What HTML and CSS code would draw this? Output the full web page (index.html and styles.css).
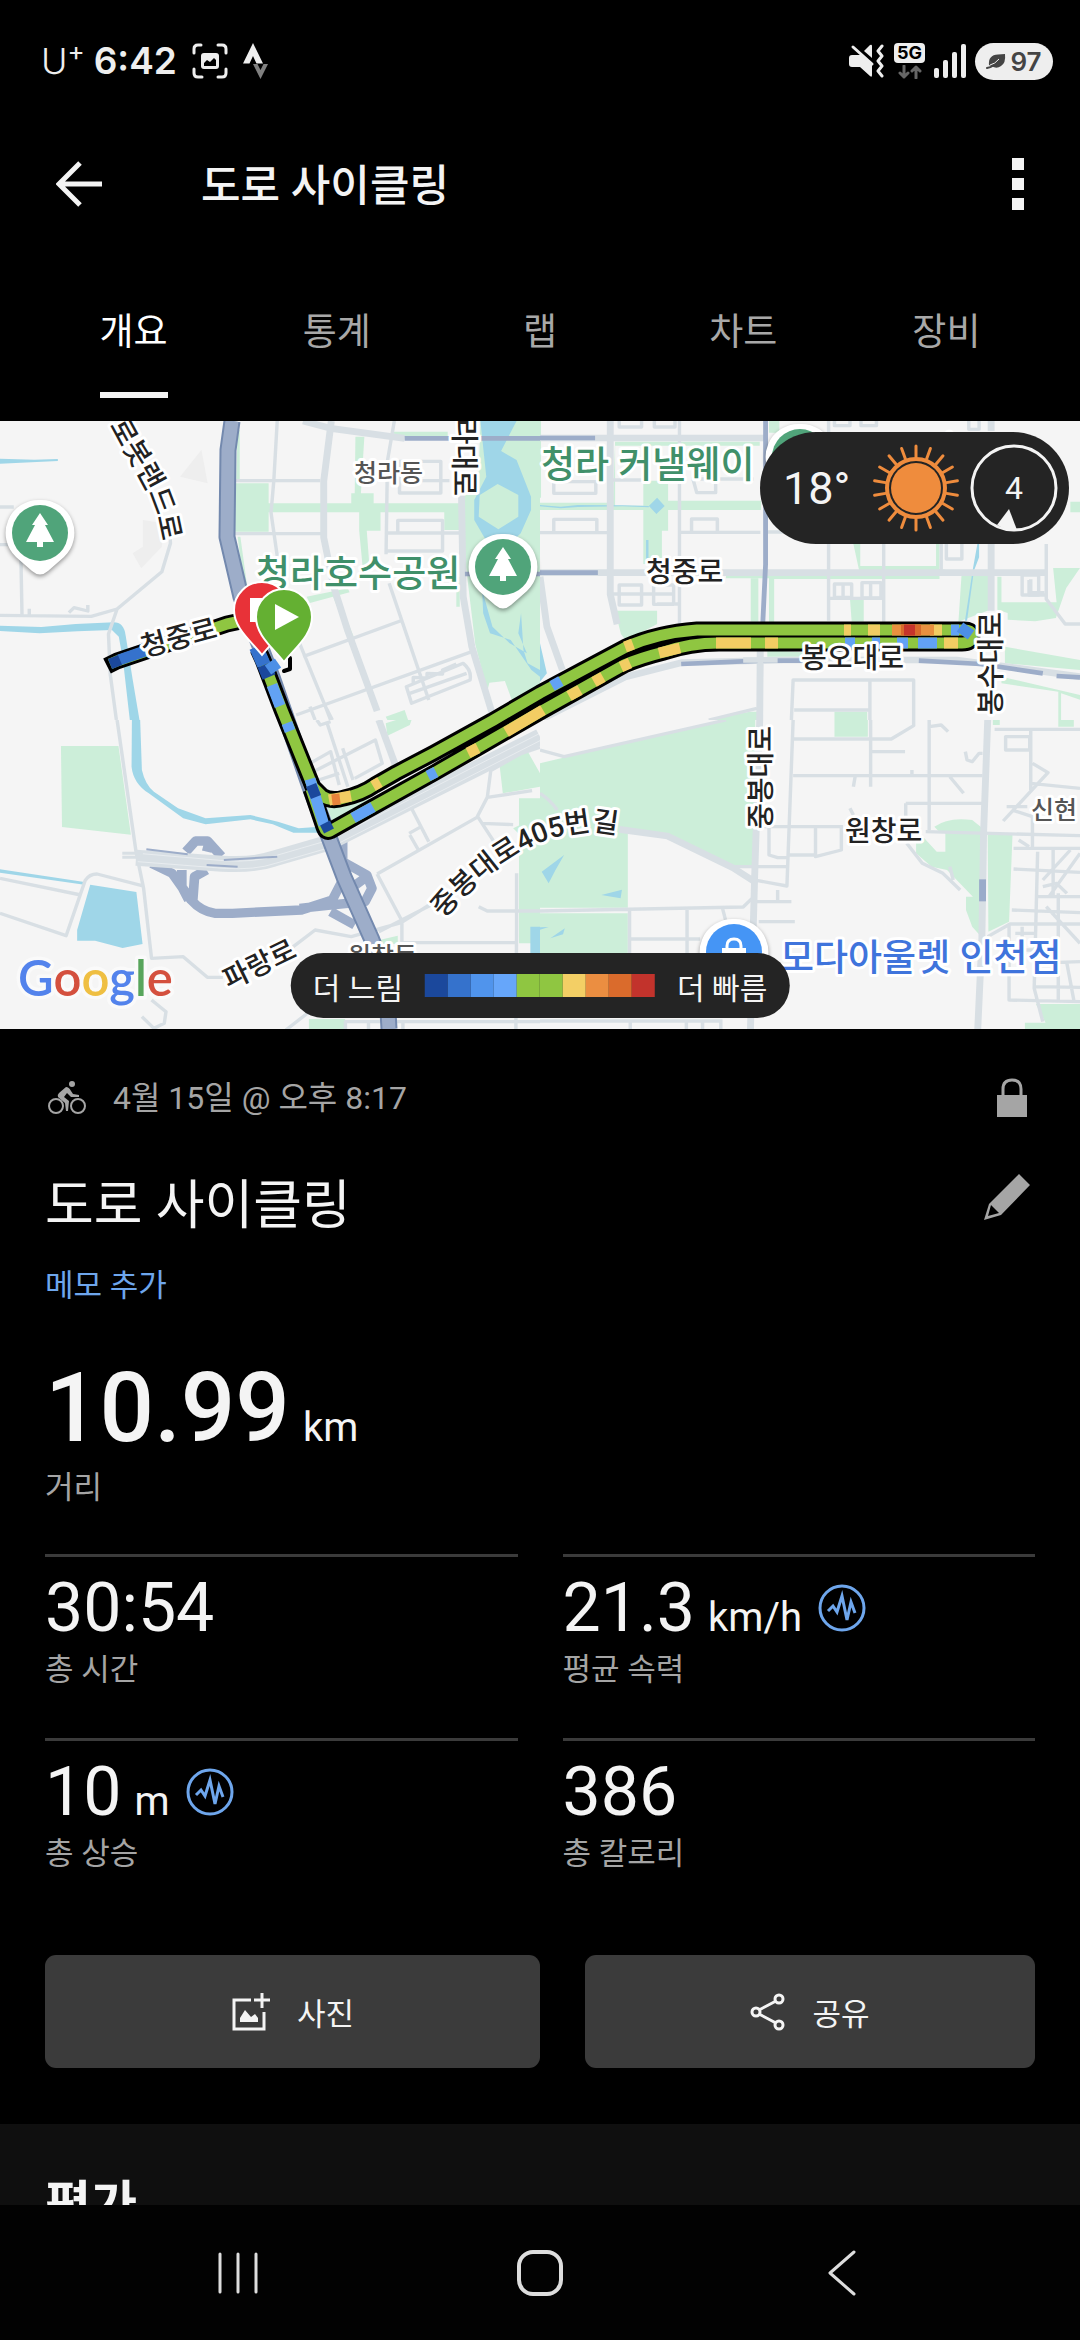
FILE: index.html
```html
<!DOCTYPE html>
<html lang="ko">
<head>
    <meta charset="UTF-8">
    <meta name="viewport" content="width=device-width, initial-scale=1.0">
    <title>도로 사이클링</title>
    <link rel="stylesheet" href="styles.css">
</head>
<body>
    <div class="status-bar">
        <div class="status-left">
            <span class="carrier">U<sup>+</sup></span>
            <span class="clock">6:42</span>
            <svg class="status-shot" width="36" height="36" viewBox="0 0 36 36" fill="none" stroke="#eee" stroke-width="3" stroke-linecap="round">
                <path d="M2 10V6q0-4 4-4h3M26 2h4q4 0 4 4v4M34 26v4q0 4-4 4h-4M10 34H6q-4 0-4-4v-4"/>
                <rect x="9" y="10" width="18" height="16" rx="3" fill="#eee" stroke="none"/>
                <path d="M12 23v-3l3-3 3 2 4-4 2 2v6z" fill="#000" stroke="none"/>
            </svg>
            <svg width="26" height="36" viewBox="0 0 26 36">
                <path d="M10 0l10 20.500h-6.500L10 13l-3.500 7.500H0z" fill="#eee"/>
                <path d="M10 21h4.500l3 6 3-6H25l-7.500 15z" fill="#808080"/>
            </svg>
        </div>
        <div class="status-right">
            <svg width="36" height="34" viewBox="0 0 36 34">
                <path d="M0 14q0-3 3-3h4l5 0 11 9v11q0 3-2 1L11 23H3q-3 0-3-3z" fill="#eee"/>
                <path d="M15 7l6-6q2-1 2 1v12z" fill="#eee"/>
                <path d="M4 3l19 17" stroke="#eee" stroke-width="3" stroke-linecap="round"/>
                <path d="M33 2l-4 5 4 5-4 5 4 5-4 5 4 5" fill="none" stroke="#eee" stroke-width="3" stroke-linecap="round" stroke-linejoin="round"/>
            </svg>
            <span class="network">
                <span class="network-badge">5G</span>
                <svg width="24" height="14" viewBox="0 0 24 14" fill="none" stroke="#666" stroke-width="3" stroke-linecap="round" stroke-linejoin="round">
                    <path d="M6 1v11M2 8l4 4 4-4M18 13V2M14 6l4-4 4 4"/>
                </svg>
            </span>
            <svg width="32" height="34" viewBox="0 0 32 34" fill="#eee">
                <rect x="0" y="24" width="5" height="10" rx="2"/>
                <rect x="9" y="16" width="5" height="18" rx="2"/>
                <rect x="18" y="8" width="5" height="26" rx="2"/>
                <rect x="27" y="0" width="5" height="34" rx="2"/>
            </svg>
            <span class="battery">
                <svg width="20" height="15" viewBox="0 0 20 15">
                    <path d="M3 11Q2 1 12 .5l7-.5q1 9-4 12-4 3-9 .5z" fill="#444"/>
                    <path d="M1 14q7-1 12-8" fill="none" stroke="#444" stroke-width="2" stroke-linecap="round"/>
                    <path d="M4 11q5-1 9-6" fill="none" stroke="#eee" stroke-width="1"/>
                </svg>
                97
            </span>
        </div>
    </div>

    <header class="app-bar">
        <button class="icon-button" aria-label="뒤로">
            <svg width="46" height="46" viewBox="0 0 46 46" fill="none" stroke="#f4f4f4" stroke-width="5">
                <path d="M24 2L3 23l21 21M3 23h43"/>
            </svg>
        </button>
        <h1>도로 사이클링</h1>
        <button class="icon-button" aria-label="더보기">
            <svg width="12" height="52" viewBox="0 0 12 52" fill="#f4f4f4">
                <path d="M0 0h12v12H0zM0 20h12v12H0zM0 40h12v12H0z"/>
            </svg>
        </button>
    </header>

    <nav class="tabs">
        <button class="tab active">개요</button>
        <button class="tab">통계</button>
        <button class="tab">랩</button>
        <button class="tab">차트</button>
        <button class="tab">장비</button>
    </nav>

    <main>
        <section class="map">
            <svg class="map-canvas" viewBox="0 0 1080 608">
                <!-- map tiles -->
                <svg x="0" y="-11" width="540" height="310" viewBox="0 0 1568 930" preserveAspectRatio="none">
                    <g class="park">
                        <path d="M683 220h97v60h240v-30h10l2-170h26l-10 170h37v30h285v27h-265v55h-40l8 110h-20l-10-110v-55H780v58h-97z"/>
                        <path d="M1290 300h50v60h-50zM690 60h6v150h-10zM690 380h8l20 150h-10zM1325 500h10v90h-10zM890 560l120-25 5 12-115 32zM965 555l12-5 50 130-10 10z"/>
                        <path d="M1395 33h173v800l-80 42-22-62-45 5-6 25-35-140-30-260V250l40-60zM1120 920l55-20 10 30h-60zM1140 65h160v14h-150z"/>
                    </g>
                    <g class="water">
                        <path d="M1395 33h105l-45 90 45 27 42 110v40l-30 70-40 40h-50l-45-80v-60l35-70z"/>
                        <path d="M1400 540l30 110 50 50 50 30-25-60 8-60 7 110 12 40 36 20v20l-25-20-60-90-60-20-20-60z"/>
                        <path d="M0 146l100 3 68-2v6l-168 8zM0 647l120 4 100-9 110-5q30 0 35 40l20 130 20 123h-28l-20-180-12-70-20-20-100 4-110 6-115-7z"/>
                    </g>
                    <path class="park" d="M1445 222l60 33v65l-58 38-57-38 3-65z"/>
                    <g fill="#eee"><path d="M585 120l18 100-80-20zM415 330l60 10-5 70-60 65-25-45 30-20z"/></g>
                    <g class="road">
                        <path d="M0 291h40M0 404h60l4 216M0 616l265 3 75-22 130-112 25-85-5-80M340 597l-25 75 5 120 18 138M85 616v-20M200 608l15-15 40 10v-18"/>
                        <path d="M685 212h245M805 33l-10 180-8 95 18 130M683 371h250M1145 33l-20 120-4 280M1120 369h220M1160 212v-58h120v95H1160v-37h145M1155 369v-38h130v92h-165"/>
                        <path d="M880 740l290-110M860 915l510-190M870 700l75 190 15 40M1130 520l115 350M900 890l15 40M940 880l25 50M1180 830l165-70q25 20 20 50l-170 70zM1190 850l165-60M1200 820v-18l40 2v-14l45 2v-12l40-18"/>
                    </g>
                    <g class="road road-wide">
                        <path d="M880 33l80 22 215 30M962 33l-22 180v170l30 150 40 130 85 240M1340 250l5 310 25 150 65 220"/>
                    </g>
                    <g class="trunk-thin"><path d="M1175 85h393M1350 492h218"/></g>
                </svg>
                <svg x="540" y="-11" width="540" height="310" viewBox="0 0 1568 930" preserveAspectRatio="none">
                    <g class="park">
                        <path d="M218 95h420v12H218v180h82v-75h72v60h270v28H372v62h-18v100h-54V300H0v-22h212zM665 33h30v35h-30zM910 402h20v66h220V402h10v75l130 20h-130v10H680v130h-15V505H540v-8h390M1540 275h28v32h-28z"/>
                        <path d="M612 505h22v130h-22zM218 602h122v40l-90 50-15-20zM900 565h40v70h-35zM1225 480h80v120l-90 35zM1340 500v77h160l-10-103h78l-40 60-30 90-60 10-80-5v-20l-30-10V500zM1350 710l218 40v30l-218-20zM1340 800l228 55v14l-55-19v80h-8v-85l-165-25zM660 720l120 8v12H660zM500 925l110-20h20v25H500zM855 905h95v25h-95zM0 33h3v230H0z"/>
                    </g>
                    <g class="water">
                        <path d="M340 263l22 25-24 24-22-24zM308 390h7v60h-7zM0 700l20 90-20 25zM0 285l60 5 50-5 130 1 76 2v4l-76-3-130 2-50 4-60-6zM1270 402h5v40l-15 40-20 150h-6l22-150zM1303 33h6v30h-6z"/>
                    </g>
                    <g class="road">
                        <path d="M0 368h200M405 367h235M660 366h90M405 33v610M838 402v230M838 33v35M998 402v235M1165 402v85M1180 402v45h45v-45M1470 402v165l55 75h43M200 210h100M440 207h180M840 565h158"/>
                        <path d="M40 210v40h122v-35h-122M40 368v-40h125v40M440 367v-40h75v40M445 210l10 38h55v-38M230 33v18h65V33M332 33v18h60V33M210 552h180M230 525h65v60h-65zM330 525h58v58h-58zM855 522h50v40h-50zM935 518h55v46h-55zM880 522v40M960 518v46M1400 495h48v60h-48zM1425 508v40h40M855 33v14h45V33M932 33v14h45V33M340 582h65"/>
                        <path d="M730 930l5-120h350v120M958 810v120M738 900h220M490 930l140-35M1470 555h-50v-45M1245 33v25h30V33"/>
                    </g>
                    <g class="road road-wide">
                        <path d="M204 33v520l20 90M0 84h660M0 488h1470M1310 402v200M1310 33v30M0 500l20 150 45 130M640 640l-2 290M0 930l250-130 160-42 300-8 500 0 360 50"/>
                    </g>
                    <g class="trunk-thin">
                        <path d="M0 84h160M0 488h168M655 33v430l-8 175M410 762l230-10 130 0M1100 752l180 10 180 28M1500 798l68 4"/>
                    </g>
                    <path d="M640 700v100M590 750h100" stroke="#d8dfe4" stroke-width="16"/>
                </svg>
                <svg x="0" y="299" width="540" height="310" viewBox="0 0 1568 930" preserveAspectRatio="none">
                    <g class="park">
                        <path d="M177 78h167l36 266-200-23zM1120 10l30-10h45l-5 15-65 32zM1450 130l80-40 38 70v40l-108 20zM1507 235h61v435h-61zM1490 325l20-10v30zM945 245l140-10-120 70zM1080 665l75-18v25h-70zM897 897h105v33H897z"/>
                    </g>
                    <g class="water">
                        <path d="M383 0h24l5 150q10 45 35 65l70 50 80 30 130-10 80 20 60 20 60-5v18l-75 0-60-25-65-15-130 15-65-18-100-75q-45-30-50-80zM0 448l245 38v8L0 458zM262 494l134 22 18 156-58 12-80-22h-52v-32zM1540 620h28v80h-28z"/>
                    </g>
                    <g class="road">
                        <path d="M340 0l55 395 22 110 23 210 92-5 70 62h45M0 475l235 50M0 580l192 67 55-165q12-20 35-20l130 35M440 840l42 35-5 35-30 15-35-35M830 930l75-60 0-30M845 685l70-55 105 20 145-42 95-62M1100 635l170-90M1095 462l290-170 30-60 130-20M1095 462l72 140v66h335M1415 232l10-80 85-50 58-20M1387 290l60 95M1500 460v170l-2 270M1003 930v-25h565M1070 905v25M1170 905v25M1498 905v25M1390 560l25 13h153M1400 310l90 4"/>
                        <path d="M900 130l60-35 25 100M910 155l180-95 20 70-80 45M925 180l60-20M920 0l10 15 30-10M950 10l60 190M995 85l30 95M1190 255l55 110M1190 345l25 45M1188 340l35-20"/>
                    </g>
                    <path d="M1100 0l50 140" class="road road-wide"/>
                    <g class="ramp">
                        <path d="M440 430l60 30 55 80q30 35 70 40h50l200-10 90-30 30-60V350M528 450v50l20 40M600 450l-35 20-5 70M540 395l28-32h35l40 46M600 395l8-30M970 410l95 55 15 40-20 40-100 10-90 10M1065 470l-40 30M960 575l70 40"/>
                    </g>
                    <g fill="none" stroke="#d8dfe4" stroke-width="48"><path d="M395 413l250 18q90 6 150-15l160-48L1568 50"/></g>
                    <g fill="none" stroke="#fff" stroke-width="2" opacity=".6"><path d="M400 400l250 22q90 6 150-15l160-48L1568 40M400 425l250 20q90 6 150-15l160-48L1568 62"/></g>
                    <g fill="none" stroke="#d8dfe4" stroke-width="9"><path d="M355 400h60M355 412h60"/></g>
                    <path d="M425 388l120 15M650 420l155-10M600 435l90 5" class="ramp ramp-lane"/>
                </svg>
                <svg x="540" y="299" width="540" height="310" viewBox="0 0 1568 930" preserveAspectRatio="none">
                    <g class="park">
                        <path d="M0 130l530-130h95v440h-75L380 350l-125-20v233H0zM0 580h255v130H0zM855 0h97v50h-97zM1145 320q40-30 110-20l30 25v330l-30-35-18-50v-40h20l-75-80-45-10-45-40v-30l20-20 40 45h25v-60l-18 0zM1300 345h72l-10 260-60 30zM1440 852h128v78h-160v-22h60zM1505 0h45v20h-45zM1315 0h20v15h-20z"/>
                    </g>
                    <g class="water"><path d="M70 405l-25 45-20 40-20-35zM178 525l60-16-4 26zM30 655l42-30-5 18zM0 622l25-1-25 8z"/></g>
                    <g class="road">
                        <path d="M0 90l70 20 470-110M0 573l590-12 25-25M260 570v140M427 565v145M265 657h200M530 565l10 40M0 220q30 20 50 50M550 440h168M735 0l-18 498-105-20M735 57h285l65-40V0M960 0v200M735 167h550M965 95h95M1130 0v330M1062 250h225M1062 250v60M620 320h260M665 320v85l25 8h30M800 320v90l75-20v-65M725 405h80M1120 335l448 12M1065 370l45 60 60 30 50 50M630 545h100M635 605h105M690 510v35M1080 150v15M915 170l-5 30M1190 170l40 50M1130 20l35-5 20 20M1235 95l5 25 15 5 20-25h10M900 265l10 20M1190 440l10 40"/>
                        <path d="M1320 28h248M1425 30v180M1352 50h70v40h-70zM1430 130l45 28-130 145M1425 190l143 15M1355 260h60M1375 385h193M1375 447l193 10M1445 395l-10 410 25 100M1370 570l198 8M1300 650l65-38h203M1362 610v230l206 5M1430 730l138-5M1440 800l128 2M1370 270l60 20v100M1490 380v150M1505 520v320M1540 390l-80 90M1568 400l-90 130M1460 500l40-10 30 30M1445 530h123M1380 640h60M1375 690h60M1400 620v90M1470 560l98 110M1530 730l20 110M1390 360l30 20M0 903h530M262 900v30M425 900v30M472 900v30M525 900v30"/>
                    </g>
                    <g class="road road-wide">
                        <path d="M638 0l-15 480-12 450M1300 0l-12 340-5 320-12 270M230 328l140 20 190 95 60 40"/>
                    </g>
                    <path d="M1285 478v66" stroke="#9aabca" stroke-width="20"/>
                </svg>

                <!-- expressway -->
                <g fill="none" stroke-linejoin="round">
                    <path d="M232 0l-4 29-1 87 14 60 31 80 38 110 34 90 28 63 14 36 3 53" stroke="#7389ae" stroke-width="17"/>
                    <path d="M232 0l-4 29-1 87 14 60 31 80 38 110 34 90 28 63 14 36 3 53" stroke="#9dadc9" stroke-width="13"/>
                </g>

                <!-- ride track -->
                <g fill="none" stroke-linejoin="round">
                    <path d="M284 250l6-2V237" stroke="#000" stroke-width="4" stroke-linecap="round"/>
                    <g stroke="#000" stroke-width="17">
                        <path d="M107 245L117 240L227 203L241 200M258 228L263 239L282 289L313 366L322 375Q331 381 344 377Q362 373 375 364L396 352L434 332L492 300L540 272L581 250L626 226Q657 212 697 209H962Q972 208 972 215T962 222H719Q690 222 664 231Q640 237 624 244L574 272L540 291L434 352L362 392L330 410Q326 412 324 406L311 368"/>
                    </g>
                    <path d="M110 243L117 240L227 203L241 200M258 228L263 239L282 289L313 366L322 375Q331 381 344 377Q362 373 375 364L396 352L434 332L492 300L540 272L581 250L626 226Q657 212 697 209H962Q972 208 972 215T962 222H719Q690 222 664 231Q640 237 624 244L574 272L540 291L434 352L362 392L330 410Q326 412 324 406L311 368" stroke="#8fc641" stroke-width="11"/>
                </g>
                <g fill="none" stroke-width="11">
                    <path d="M119 239l26-9" stroke="#3572cc"/>
                    <path d="M110 243l10-4" stroke="#1b489c"/>
                    <path d="M256 226l8 18" stroke="#3572cc" stroke-width="14"/>
                    <path d="M264 244l5 12" stroke="#1b489c" stroke-width="14"/>
                    <path d="M278 242l-10 7" stroke="#4c8fe6"/>
                    <path d="M272 264l8 21M287 302l3 8M310 358l14 46" stroke="#62a2f5"/>
                    <path d="M311 364l5 12" stroke="#1b489c"/>
                    <path d="M325 402l4 8" stroke="#1b489c"/>
                    <path d="M353 397l20-11M428 355l8-4" stroke="#62a2f5"/>
                    <path d="M329 379l22-4M373 365l7-4M468 332l10-5M506 311l37-22M569 275l11-6M594 261l9-5M621 246l9-4M659 232l21-5M716 222h35M765 222h13M625 226l8-3M944 222h14M844 209h7M868 209h12M930 209h12" stroke="#f2cd63"/>
                    <path d="M332 379l8-1" stroke="#e9833c"/>
                    <path d="M552 265l9-5M845 222h10M897 222h11M918 222h19M951 209h8M872 222h8" stroke="#62a2f5"/>
                    <path d="M892 209h42" stroke="#e9913f"/>
                    <path d="M901 209h20" stroke="#d96a2c"/>
                    <path d="M904 209h11" stroke="#c5342c"/>
                    <path d="M960 206l11 8" stroke="#4c8fe6"/>
                </g>

                <!-- labels -->
                <g class="map-label">
                    <path id="robot-road" fill="none" stroke="none" d="M110 4C122 35 158 66 163 130"/>
                    <path id="jungbong-road" fill="none" stroke="none" d="M444 498C480 452 530 422 560 415S600 408 640 420"/>
                    <text><textPath href="#robot-road">로봇랜드로</textPath></text>
                    <text><textPath href="#jungbong-road">중봉대로405번길</textPath></text>
                    <text transform="translate(454 -28) rotate(90)">청라대로</text>
                    <text transform="translate(771 408) rotate(-90)">중봉대로</text>
                    <text transform="translate(1001 294) rotate(-90)">봉수대로</text>
                    <text transform="translate(951 62) rotate(-90)">서로</text>
                    <text transform="translate(144 236) rotate(-15)">청중로</text>
                    <text transform="translate(229 569) rotate(-26)">파랑로</text>
                    <text x="646" y="161">청중로</text>
                    <text x="801" y="247">봉오대로</text>
                    <text x="845" y="420">원창로</text>
                    <text class="district" x="354" y="61">청라동</text>
                    <text class="district" x="1031" y="398">신현</text>
                    <text class="district" x="348" y="544">원창동</text>
                    <text class="place green" x="541" y="57">청라 커낼웨이</text>
                    <text class="place green" x="256" y="166">청라호수공원</text>
                    <text class="place blue" x="780" y="550">모다아울렛 인천점</text>
                </g>
                <text class="google" x="18" y="575"><tspan fill="#5383ec">G</tspan><tspan fill="#d4503e">o</tspan><tspan fill="#efbf42">o</tspan><tspan fill="#5383ec">g</tspan><tspan fill="#58a55c">l</tspan><tspan fill="#d4503e">e</tspan></text>

                <!-- place pins -->
                <defs>
                    <g id="pin">
                        <path d="M0-33a33 33 0 0 1 24 57L8 38q-8 7-16 0l-16-14A33 33 0 0 1 0-33z" fill="#fff"/>
                    </g>
                    <g id="park-pin">
                        <use href="#pin"/>
                        <circle r="28" fill="#50a47a"/>
                        <path d="M0-20l8 12H5L14 9H3v5h-6V9h-11L-5-8h-3z" fill="#fff"/>
                    </g>
                </defs>
                <g class="pins">
                    <use href="#park-pin" x="40" y="112"/>
                    <use href="#park-pin" x="503" y="146"/>
                    <use href="#park-pin" x="800" y="36"/>
                    <g transform="translate(734 531)">
                        <use href="#pin"/>
                        <circle r="28" fill="#4595f5"/>
                        <path d="M-12-4h24v16h-24z" fill="#fff"/>
                        <path d="M-7-2v-4q0-7 7-7t7 7v4" fill="none" stroke="#fff" stroke-width="3"/>
                        <path d="M-4 1v2M4 1v2" stroke="#4595f5" stroke-width="3"/>
                    </g>
                </g>

                <!-- finish and start -->
                <g stroke="#fff" stroke-width="2">
                    <path d="M262 161a28 28 0 0 1 28 28c0 18-16 30-28 45-12-15-28-27-28-45a28 28 0 0 1 28-28z" fill="#e83238"/>
                    <path d="M251 178h22v22h-22z" fill="#fff"/>
                    <path d="M284 168a28 28 0 0 1 28 28c0 18-16 30-28 45-12-15-28-27-28-45a28 28 0 0 1 28-28z" fill="#64b032"/>
                    <path d="M275 183l24 13-24 13z" fill="#fff" stroke="none"/>
                </g>
            </svg>

            <div class="weather">
                <span class="temperature">18°</span>
                <svg width="88" height="88" viewBox="-44 -44 88 88">
                    <circle r="25" fill="#ef8c3d"/>
                    <circle r="29" fill="none" stroke="#ef8c3d" stroke-width="4"/>
                    <g stroke="#ef8c3d" stroke-width="3" stroke-linecap="round">
                        <path id="rays" d="M0-31v-11M10.600-29.100l3.800-10.400M19.900-23.700l7.100-8.500"/>
                        <use href="#rays" transform="rotate(60)"/>
                        <use href="#rays" transform="rotate(120)"/>
                        <use href="#rays" transform="rotate(180)"/>
                        <use href="#rays" transform="rotate(240)"/>
                        <use href="#rays" transform="rotate(300)"/>
                    </g>
                </svg>
                <div class="wind">
                    <svg width="88" height="88" viewBox="0 0 88 88">
                        <circle cx="44" cy="44" r="42" fill="none" stroke="#f4f4f4" stroke-width="3"/>
                        <path d="M39 65l8 21q-10 1-20-5z" fill="#f4f4f4"/>
                    </svg>
                    <span>4</span>
                </div>
            </div>

            <div class="legend">
                <span>더 느림</span>
                <div class="scale">
                    <i class="c1"></i><i class="c2"></i><i class="c3"></i><i class="c4"></i><i class="c5"></i>
                    <i class="c5"></i><i class="c6"></i><i class="c7"></i><i class="c8"></i><i class="c9"></i>
                </div>
                <span>더 빠름</span>
            </div>
        </section>

        <section class="summary">
            <div class="row date-row">
                <svg width="40" height="34" viewBox="0 0 40 34" fill="none" stroke="#a5a5a5" stroke-width="2">
                    <circle cx="8" cy="25" r="7"/>
                    <circle cx="30" cy="25" r="7"/>
                    <circle cx="24" cy="3" r="3" fill="#a5a5a5" stroke="none"/>
                    <path d="M18 6q3 0 5 4l2 3 6 1v2h-8l-4-4-3 4 5 4-1 10h-2l-1-8-7-6q-1-2 1-4z" fill="#a5a5a5" stroke="none"/>
                </svg>
                <span class="date">4월 15일 @ 오후 8:17</span>
                <svg width="30" height="40" viewBox="0 0 30 40">
                    <path d="M6 18v-7q0-9 9-9t9 9v7" fill="none" stroke="#a5a5a5" stroke-width="3"/>
                    <path d="M0 17h30v22H0z" fill="#a5a5a5"/>
                </svg>
            </div>
            <div class="row title-row">
                <h2>도로 사이클링</h2>
                <button class="icon-button edit" aria-label="편집">
                    <svg width="46" height="46" viewBox="0 0 46 46">
                        <path d="M35 0l11 11-29 30L0 46l5-16zM7 31L4 42l11-3z" fill="#a5a5a5" fill-rule="evenodd"/>
                    </svg>
                </button>
            </div>
            <a class="memo" href="#">메모 추가</a>

            <div class="distance">
                <div class="distance-value">10.99<small>km</small></div>
                <div class="label">거리</div>
            </div>

            <div class="stats">
                <div class="stat">
                    <div class="value">30:54</div>
                    <div class="label">총 시간</div>
                </div>
                <div class="stat">
                    <div class="value">
                        <span>21.3<small>km/h</small></span>
                        <svg width="48" height="48" viewBox="0 0 48 48" fill="none" stroke="#6ea6ec" stroke-width="3">
                            <circle cx="24" cy="24" r="22"/>
                            <path d="M10 27l5-5 4 6 5-16 5 24 4-18 4 11"/>
                        </svg>
                    </div>
                    <div class="label">평균 속력</div>
                </div>
                <div class="stat">
                    <div class="value">
                        <span>10<small>m</small></span>
                        <svg width="48" height="48" viewBox="0 0 48 48" fill="none" stroke="#6ea6ec" stroke-width="3">
                            <circle cx="24" cy="24" r="22"/>
                            <path d="M10 27l5-5 4 6 5-16 5 24 4-18 4 11"/>
                        </svg>
                    </div>
                    <div class="label">총 상승</div>
                </div>
                <div class="stat">
                    <div class="value">386</div>
                    <div class="label">총 칼로리</div>
                </div>
            </div>

            <div class="actions">
                <button class="action">
                    <svg width="40" height="40" viewBox="0 0 40 40" fill="none" stroke="#f4f4f4" stroke-width="3">
                        <path d="M20 8H3v29h30V20M31 1v15M23 8h16"/>
                        <path d="M9 30V26l5-8 6 7 4-3 3 4v4z" fill="#f4f4f4" stroke="none"/>
                    </svg>
                    사진
                </button>
                <button class="action">
                    <svg width="36" height="40" viewBox="0 0 36 40" fill="none" stroke="#f4f4f4" stroke-width="3">
                        <circle cx="6" cy="20" r="4"/>
                        <circle cx="29" cy="7" r="4"/>
                        <circle cx="29" cy="33" r="4"/>
                        <path d="M9 18L26 9M9 22l17 9"/>
                    </svg>
                    공유
                </button>
            </div>
        </section>

        <section class="rating">
            <h3>평가</h3>
        </section>
    </main>

    <nav class="system-nav">
        <button aria-label="최근 앱">
            <svg width="42" height="46" viewBox="0 0 42 46" stroke="#ddd" stroke-width="3" stroke-linecap="round">
                <path d="M3 4v38M21 4v38M39 4v38"/>
            </svg>
        </button>
        <button aria-label="홈">
            <svg width="46" height="46" viewBox="0 0 46 46" fill="none" stroke="#ddd" stroke-width="4">
                <rect x="2" y="2" width="42" height="42" rx="14"/>
            </svg>
        </button>
        <button aria-label="뒤로">
            <svg width="30" height="46" viewBox="0 0 30 46" fill="none" stroke="#ddd" stroke-width="3" stroke-linecap="round" stroke-linejoin="round">
                <path d="M27 2L3 23l24 21"/>
            </svg>
        </button>
    </nav>
</body>
</html>
```
FILE: styles.css
```css
* {
    box-sizing: border-box;
}

body {
    display: flex;
    flex-direction: column;
    height: 100vh;
    margin: 0;
    overflow: hidden;
    background-color: #000;
    color: #f4f4f4;
    font-family: Roboto, "Noto Sans CJK KR", sans-serif;
}

h1, h2, h3 {
    margin: 0;
}

svg {
    display: block;
    flex-shrink: 0;
}

button {
    padding: 0;
    border: none;
    background: none;
    color: inherit;
    font-family: inherit;
    cursor: pointer;
}

/* status bar */
.status-bar {
    display: flex;
    justify-content: space-between;
    align-items: center;
    height: 122px;
    padding: 0 27px 0 41px;
    flex-shrink: 0;
    color: #eee;
    font-family: Inter, sans-serif;
}

.status-left, .status-right {
    display: flex;
    align-items: center;
    gap: 9px;
}

.carrier {
    display: flex;
    font-size: 36px;
    font-weight: 300;
    line-height: 40px;
}

.carrier sup {
    font-size: 26px;
    font-weight: 400;
    line-height: 20px;
}

.clock {
    font-size: 37px;
    font-weight: 600;
    line-height: 40px;
}

.status-shot {
    margin: 0 6px;
}

.network {
    display: flex;
    flex-direction: column;
    align-items: center;
    gap: 2px;
}

.network-badge {
    width: 31px;
    border-radius: 4px;
    background-color: #eee;
    color: #000;
    font-size: 18px;
    font-weight: 700;
    line-height: 20px;
    text-align: center;
}

.battery {
    display: flex;
    align-items: center;
    justify-content: center;
    gap: 4px;
    width: 78px;
    height: 37px;
    border-radius: 19px;
    background-color: #eee;
    color: #444;
    font-size: 26px;
    font-weight: 600;
}

/* app bar */
.app-bar {
    display: flex;
    align-items: center;
    height: 124px;
    padding: 0 56px;
    flex-shrink: 0;
}

.app-bar h1 {
    flex: 1;
    margin-left: 99px;
    padding-top: 3px;
    font-size: 43px;
    font-weight: 500;
    line-height: 60px;
}

/* tabs */
.tabs {
    display: flex;
    align-items: flex-end;
    height: 175px;
    padding: 0 32px 23px;
    flex-shrink: 0;
}

.tab {
    flex: 1;
    display: flex;
    flex-direction: column;
    align-items: center;
    color: #a8a8a8;
    font-size: 37px;
    line-height: 52px;
}

.tab::after {
    content: "";
    width: 68px;
    height: 6px;
    margin-top: 33px;
}

.tab.active {
    color: #fff;
}

.tab.active::after {
    background-color: #f4f4f4;
}

main {
    flex: 1;
    min-height: 0;
    overflow-y: auto;
    scrollbar-width: none;
}

/* map */
.map {
    position: relative;
    background-color: #f5f5f5;
}

.map-canvas {
    width: 100%;
    height: auto;
}

.park {
    fill: #cceed9;
}

.water {
    fill: #9fd6e8;
}

.road {
    fill: none;
    stroke: #d8dfe4;
    stroke-width: 10;
    stroke-linejoin: round;
}

.road-wide {
    stroke-width: 20;
}

.trunk-thin {
    fill: none;
    stroke: #9dadc9;
    stroke-width: 14;
}

.ramp {
    fill: none;
    stroke: #9dadc9;
    stroke-width: 28;
    stroke-linejoin: round;
}

.ramp-lane {
    stroke-width: 6;
}

.map-label text {
    fill: #222;
    stroke: #fff;
    stroke-width: 6px;
    stroke-linejoin: round;
    paint-order: stroke;
    font-size: 28px;
    font-weight: 500;
}

.map-label .district {
    fill: #555;
    font-size: 25px;
}

.map-label .place {
    font-size: 37px;
}

.map-label .green {
    fill: #40906a;
}

.map-label .blue {
    fill: #3f74dc;
}

.google {
    stroke: #fafafa;
    stroke-width: 7px;
    stroke-linejoin: round;
    paint-order: stroke;
    font-family: Lato, sans-serif;
    font-size: 49px;
    font-weight: 600;
}

.pins {
    filter: drop-shadow(0 2px 2px rgba(0, 0, 0, 0.4));
}

.weather {
    position: absolute;
    top: 11px;
    right: 11px;
    display: flex;
    align-items: center;
    gap: 10px;
    height: 112px;
    padding: 0 11px 0 23px;
    border-radius: 56px;
    background-color: #242424;
}

.temperature {
    width: 79px;
    font-size: 45px;
}

.wind {
    display: grid;
    place-items: center;
}

.wind > * {
    grid-area: 1 / 1;
}

.wind span {
    font-size: 32px;
}

.legend {
    position: absolute;
    bottom: 11px;
    left: 50%;
    display: flex;
    align-items: center;
    gap: 22px;
    height: 65px;
    padding: 0 22px;
    border-radius: 33px;
    background-color: #242424;
    font-size: 30px;
    white-space: nowrap;
    transform: translateX(-50%);
}

.scale {
    display: flex;
}

.scale i {
    width: 23px;
    height: 23px;
}

.c1 { background-color: #1b489c; }
.c2 { background-color: #3572cc; }
.c3 { background-color: #5094ec; }
.c4 { background-color: #66a6fa; }
.c5 { background-color: #8fc641; }
.c6 { background-color: #f3cf65; }
.c7 { background-color: #eb8e41; }
.c8 { background-color: #da6b2c; }
.c9 { background-color: #c2332c; }

/* summary */
.summary {
    padding: 49px 45px 56px;
}

.row {
    display: flex;
    align-items: center;
    justify-content: space-between;
}

.date-row {
    padding: 0 8px 0 3px;
}

.date {
    flex: 1;
    margin-left: 25px;
    color: #a5a5a5;
    font-size: 32px;
    line-height: 40px;
}

.title-row {
    margin-top: 56px;
    padding-right: 5px;
}

.title-row h2 {
    font-size: 53px;
    font-weight: 400;
    line-height: 64px;
}

.edit {
    align-self: flex-start;
}

.memo {
    display: block;
    width: fit-content;
    margin-top: 28px;
    color: #6ea6ec;
    font-size: 31px;
    line-height: 40px;
    text-decoration: none;
}

small {
    margin-left: 13px;
    font-size: 40px;
    font-weight: 400;
    line-height: 40px;
}

.label {
    color: #a5a5a5;
    font-size: 31px;
    line-height: 40px;
}

.distance {
    margin-top: 46px;
}

.distance-value {
    margin-bottom: 4px;
    font-size: 96px;
    font-weight: 500;
    line-height: 112px;
}

.stats {
    display: grid;
    grid-template-columns: 1fr 1fr;
    column-gap: 45px;
    margin-top: 46px;
}

.stat {
    padding: 11px 0 48px;
    border-top: 3px solid #3b3b3b;
}

.value {
    display: flex;
    align-items: center;
    gap: 16px;
    height: 80px;
    margin-bottom: 2px;
    font-size: 68px;
    line-height: 80px;
}

.actions {
    display: grid;
    grid-template-columns: 11fr 10fr;
    gap: 45px;
    margin-top: 33px;
}

.action {
    display: flex;
    align-items: center;
    justify-content: center;
    gap: 26px;
    height: 113px;
    border-radius: 11px;
    background-color: #3b3b3b;
    font-size: 31px;
}

.rating {
    padding: 45px;
    background-color: #0f0f0f;
}

.rating h3 {
    font-size: 50px;
    font-weight: 700;
    line-height: 72px;
}

/* system navigation */
.system-nav {
    display: flex;
    justify-content: center;
    height: 135px;
    flex-shrink: 0;
    background-color: #020202;
}

.system-nav button {
    display: flex;
    align-items: center;
    justify-content: center;
    width: 28%;
}
```
